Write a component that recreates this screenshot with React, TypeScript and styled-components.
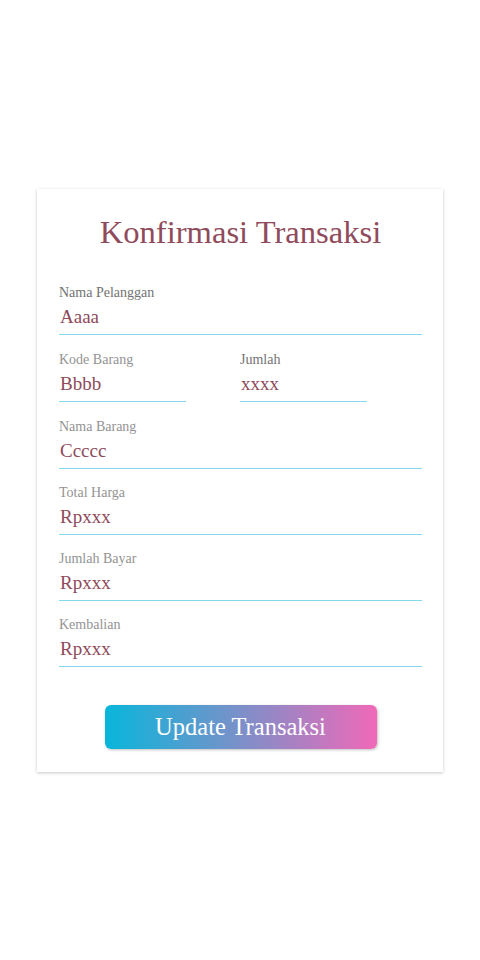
import React from "react";
import styled, { createGlobalStyle } from "styled-components";

const Global = createGlobalStyle`
  html, body { margin: 0; padding: 0; background: #ffffff; }
  body { font-family: "Liberation Serif", "DejaVu Serif", serif; }
  * { box-sizing: border-box; }
`;

const Page = styled.div`
  min-height: 960px;
  display: flex;
  align-items: center;
  justify-content: center;
`;

const Card = styled.form`
  width: 406px;
  background: #fff;
  box-shadow: 0 1px 3px rgba(0, 0, 0, 0.22);
  padding: 22px 21px 23px 22px;
  display: flex;
  flex-direction: column;
`;

const Title = styled.h1`
  margin: 0 0 32px;
  font-weight: 400;
  font-size: 32.6px;
  line-height: 42px;
  color: #8f4b5b;
  text-align: center;
`;

const Fields = styled.div`
  display: flex;
  flex-direction: column;
  gap: 16px;
`;

const Row = styled.div`
  display: grid;
  grid-template-columns: 127px 127px;
  column-gap: 54px;
  margin: 1px 0;
`;

const Field = styled.label`
  display: flex;
  flex-direction: column;
`;

const Label = styled.span<{ $strong?: boolean }>`
  font-size: 14px;
  line-height: 16px;
  color: ${(p) => (p.$strong ? "#727272" : "#939393")};
`;

const Input = styled.input`
  height: 34px;
  border: none;
  border-bottom: 1px solid #86d8ef;
  outline: none;
  padding: 0 1px 0;
  font-family: inherit;
  font-size: 19px;
  color: #8f4b5b;
  background: transparent;
  width: 100%;
`;

const Button = styled.button`
  align-self: center;
  margin-top: 38px;
  width: 272px;
  height: 44px;
  border: none;
  border-radius: 6px;
  background: linear-gradient(90deg, #08b6da 0%, #f069b8 100%);
  box-shadow: 1px 1px 3px rgba(0, 0, 0, 0.25);
  color: #fff;
  font-family: inherit;
  font-size: 24.5px;
  cursor: pointer;
`;

export default function App() {
  return (
    <Page>
      <Global />
      <Card onSubmit={(e) => e.preventDefault()}>
        <Title>Konfirmasi Transaksi</Title>
        <Fields>
          <Field>
            <Label $strong>Nama Pelanggan</Label>
            <Input defaultValue="Aaaa" />
          </Field>
          <Row>
            <Field>
              <Label>Kode Barang</Label>
              <Input defaultValue="Bbbb" />
            </Field>
            <Field>
              <Label $strong>Jumlah</Label>
              <Input defaultValue="xxxx" />
            </Field>
          </Row>
          <Field>
            <Label>Nama Barang</Label>
            <Input defaultValue="Ccccc" />
          </Field>
          <Field>
            <Label>Total Harga</Label>
            <Input defaultValue="Rpxxx" />
          </Field>
          <Field>
            <Label>Jumlah Bayar</Label>
            <Input defaultValue="Rpxxx" />
          </Field>
          <Field>
            <Label>Kembalian</Label>
            <Input defaultValue="Rpxxx" />
          </Field>
        </Fields>
        <Button type="submit">Update Transaksi</Button>
      </Card>
    </Page>
  );
}
